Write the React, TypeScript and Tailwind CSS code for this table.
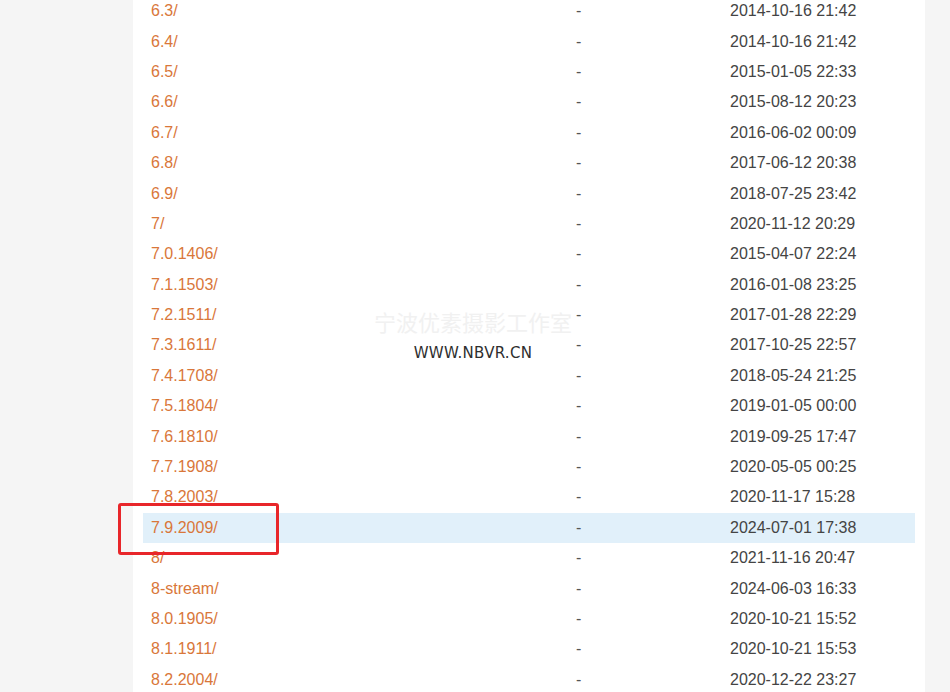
import React from "react";

const rows: [string, string][] = [
  ["6.3/", "2014-10-16 21:42"],
  ["6.4/", "2014-10-16 21:42"],
  ["6.5/", "2015-01-05 22:33"],
  ["6.6/", "2015-08-12 20:23"],
  ["6.7/", "2016-06-02 00:09"],
  ["6.8/", "2017-06-12 20:38"],
  ["6.9/", "2018-07-25 23:42"],
  ["7/", "2020-11-12 20:29"],
  ["7.0.1406/", "2015-04-07 22:24"],
  ["7.1.1503/", "2016-01-08 23:25"],
  ["7.2.1511/", "2017-01-28 22:29"],
  ["7.3.1611/", "2017-10-25 22:57"],
  ["7.4.1708/", "2018-05-24 21:25"],
  ["7.5.1804/", "2019-01-05 00:00"],
  ["7.6.1810/", "2019-09-25 17:47"],
  ["7.7.1908/", "2020-05-05 00:25"],
  ["7.8.2003/", "2020-11-17 15:28"],
  ["7.9.2009/", "2024-07-01 17:38"],
  ["8/", "2021-11-16 20:47"],
  ["8-stream/", "2024-06-03 16:33"],
  ["8.0.1905/", "2020-10-21 15:52"],
  ["8.1.1911/", "2020-10-21 15:53"],
  ["8.2.2004/", "2020-12-22 23:27"],
];

export default function App() {
  return (
    <div className="relative w-[950px] h-[692px] overflow-hidden bg-[#f5f5f5] font-['Liberation_Sans',Arial,sans-serif]">
      <div className="ml-[133px] w-[792px] h-full bg-white px-[10px] flex flex-col">
        <div className="-mt-[4px]">
          {rows.map(([name, date]) => (
            <div
              key={name}
              className={`flex items-center h-[30.4px] text-[16px] ${name === "7.9.2009/" ? "bg-[#e1f0fa]" : ""}`}
            >
              <span className="w-[433px] pl-[8px] text-[#d9773a]">{name}</span>
              <span className="w-[154px] text-[#555]">-</span>
              <span className="text-[#444]">{date}</span>
            </div>
          ))}
        </div>
      </div>

      {/* watermark */}
      <div className="absolute left-[368px] top-[306px] w-[210px] flex flex-col items-center pointer-events-none">
        <span className="text-[22px] leading-[30px] text-[#f1f1f1] font-['Noto_Sans_CJK_SC',sans-serif]">宁波优素摄影工作室</span>
        <span className="mt-[6px] text-[15px] tracking-[0.3px] text-[#2e2e2e] font-['DejaVu_Sans',sans-serif]">WWW.NBVR.CN</span>
      </div>

      {/* annotation */}
      <div className="absolute left-[118px] top-[503px] w-[161px] h-[52px] border-[3px] border-[#e8262a] rounded-[3px]" />
    </div>
  );
}
